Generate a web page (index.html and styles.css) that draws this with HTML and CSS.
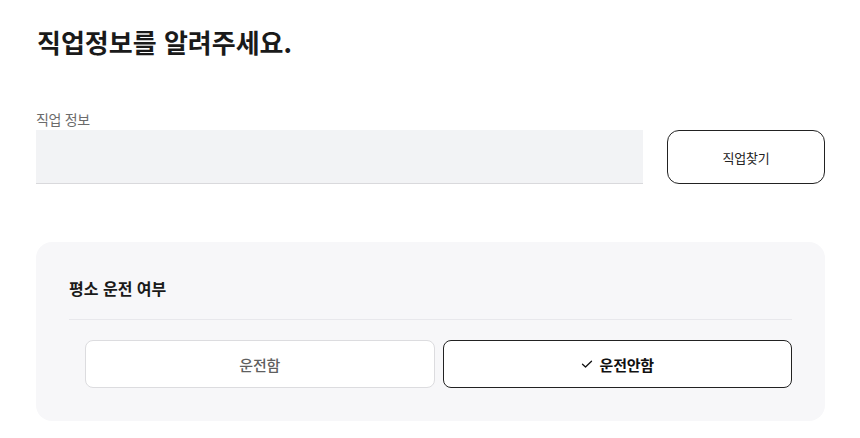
FILE: index.html
```html
<!DOCTYPE html>
<html lang="ko">
<head>
<meta charset="utf-8">
<link rel="stylesheet" href="styles.css">
</head>
<body>
<main class="page">
  <h1 class="title">직업정보를 알려주세요.</h1>
  <section class="job">
    <label class="label">직업 정보</label>
    <div class="job-row">
      <div class="input"></div>
      <button class="find">직업찾기</button>
    </div>
  </section>
  <section class="card">
    <h2 class="card-title">평소 운전 여부</h2>
    <div class="options">
      <button class="opt">운전함</button>
      <button class="opt selected">
        <svg class="check" width="12" height="12" viewBox="0 0 12 12" fill="none" stroke="#111" stroke-width="1.3" stroke-linecap="round" stroke-linejoin="round"><path d="M1.5 6.3 L4.5 9 L10.5 3.2"/></svg>
        운전안함
      </button>
    </div>
  </section>
</main>
</body>
</html>
```

FILE: styles.css
```css
* { box-sizing: border-box; margin: 0; padding: 0; }
html, body { background: #fff; }
body {
  font-family: "Noto Sans CJK KR", "Noto Sans", sans-serif;
  color: #111;
}
.page {
  padding: 24px 35px 0 36px;
}
.title {
  font-size: 26px;
  font-weight: 700;
  line-height: 36px;
  color: #1a1a1a;
  letter-spacing: 0;
  padding-left: 1px;
}
.job {
  margin-top: 50px;
}
.label {
  display: block;
  font-size: 14px;
  line-height: 19px;
  color: #6b6b6b;
  letter-spacing: -0.3px;
}
.job-row {
  display: flex;
  gap: 24px;
  margin-top: 1px;
}
.input {
  flex: 1;
  height: 54px;
  background: #f2f3f5;
  border-bottom: 1px solid #d9d9dc;
}
.find {
  width: 158px;
  height: 54px;
  background: #fff;
  border: 1px solid #222;
  border-radius: 12px;
  font-family: inherit;
  font-size: 13px;
  color: #222;
  letter-spacing: -0.2px;
}
.card {
  margin-top: 58px;
  background: #f7f7f9;
  border-radius: 16px;
  padding: 33px;
}
.card-title {
  font-size: 16px;
  font-weight: 700;
  line-height: 22px;
  padding-top: 2px;
  padding-bottom: 20px;
  border-bottom: 1px solid #e8e8ec;
  color: #1a1a1a;
  letter-spacing: 0;
}
.options {
  display: flex;
  gap: 8px;
  margin-top: 20px;
  padding-left: 16px;
}
.opt {
  flex: 1;
  height: 48px;
  background: #fff;
  border: 1px solid #dcdcdf;
  border-radius: 8px;
  font-family: inherit;
  font-size: 15px;
  font-weight: 500;
  color: #5f5f5f;
  display: flex;
  align-items: center;
  justify-content: center;
  gap: 7px;
  letter-spacing: -0.2px;
}
.opt.selected {
  border-color: #222;
  color: #111;
  font-weight: 700;
}
.check { display: block; }
```
